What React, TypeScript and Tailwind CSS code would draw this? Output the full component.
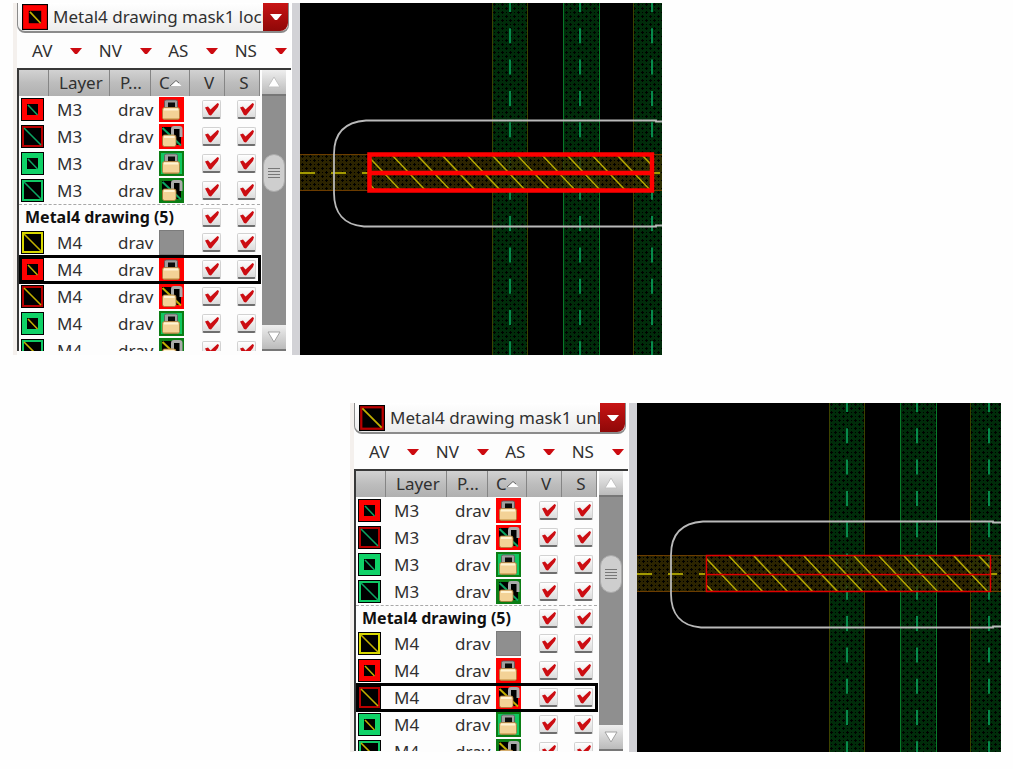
import React from "react";

type Tone = "redFill" | "redLine" | "greenFill" | "greenLine" | "yellowLine";
type Stroke = "green" | "yellow";

const toneColor: Record<Tone, string> = {
  redFill: "#ff0000",
  redLine: "#b80000",
  greenFill: "#0fd267",
  greenLine: "#0fc864",
  yellowLine: "#d8d800",
};

const strokeColor: Record<Stroke, string> = {
  green: "#0ca562",
  yellow: "#c2b000",
};

function Swatch({ tone, stroke, large }: { tone: Tone; stroke: Stroke; large?: boolean }) {
  const filled = tone === "redFill" || tone === "greenFill";
  return (
    <svg viewBox="0 0 23 23" className={large ? "block size-[26px] shrink-0" : "block size-[23px] shrink-0"} aria-hidden="true">
      <rect width="23" height="23" fill="#000" />
      <rect x="1" y="1" width="21" height="21" fill={toneColor[tone]} />
      {filled ? (
        <>
          <rect x="6" y="6" width="11" height="11" fill="#000" />
          <path d="M7 7L16.500 17" stroke={strokeColor[stroke]} strokeWidth="1.500" />
        </>
      ) : (
        <>
          <rect x="3" y="3" width="17" height="17" fill="#000" />
          <path d="M3 3L20 20" stroke={strokeColor[stroke]} strokeWidth="1.600" />
        </>
      )}
    </svg>
  );
}

type LockKind = "locked" | "unlocked" | "none";

function LockIcon({ kind, tone, stroke }: { kind: LockKind; tone: Tone; stroke: Stroke }) {
  if (kind === "none") {
    return (
      <svg viewBox="0 0 25 25" className="block size-[25px]" aria-hidden="true">
        <rect width="25" height="25" fill="#8f8f8f" />
        <rect x="0.5" y="0.5" width="24" height="24" fill="none" stroke="#7c7c7c" />
      </svg>
    );
  }
  const red = tone === "redFill" || tone === "redLine";
  const border = red ? "#ff0000" : "#0b7d14";
  return (
    <svg viewBox="0 0 25 25" className="block size-[25px]" aria-hidden="true">
      <rect width="25" height="25" fill={border} />
      {kind === "locked" ? (
        <>
          {!red && <rect x="2" y="2" width="21" height="21" fill="#10c860" />}
          <path d="M5.500 12V4.500Q5.500 3 7 3H17Q18.500 3 18.500 4.500V12Z" fill="#a0a0a0" stroke="#555" strokeWidth="0.800" />
          <rect x="9" y="5.500" width="7" height="5" fill="#0c0c0c" />
          <path d="M3.500 12.500Q3.500 10.500 5.500 10.500H18.500Q20.500 10.500 20.500 12.500V20.500Q20.500 22.500 18.500 22.500H5.500Q3.500 22.500 3.500 20.500Z" fill="#f3d296" stroke="#a87836" strokeWidth="0.800" />
          <path d="M5 12.500H19" stroke="#fff3d2" strokeWidth="2" />
          <path d="M5 21.500H19" stroke="#d8ac65" />
        </>
      ) : (
        <>
          <rect x="3" y="3" width="19" height="18" fill="#000" />
          <path d="M13.500 11V5Q13.500 3.500 15 3.500H20.500Q22 3.500 22 5V13" fill="none" stroke="#aaa" strokeWidth="3" />
          <path d="M3.500 4L22 21.500" stroke={strokeColor[stroke]} strokeWidth="2" />
          <path d="M3.500 13Q3.500 11 5.500 11H15Q17 11 17 13V20.500Q17 22.500 15 22.500H5.500Q3.500 22.500 3.500 20.500Z" fill="#f3d296" stroke="#a87836" strokeWidth="0.800" />
          <path d="M5 13H15.500" stroke="#fff3d2" strokeWidth="2" />
        </>
      )}
    </svg>
  );
}

function Check({ label }: { label: string }) {
  return (
    <label className="relative block size-[19px]">
      <input
        type="checkbox"
        defaultChecked
        aria-label={label}
        className="peer block size-[19px] appearance-none rounded-xs border border-[#d2d2d2] border-b-2 border-b-[#6e6e6e] bg-linear-to-b from-white to-[#dcdcdc]"
      />
      <svg viewBox="0 0 19 19" className="pointer-events-none absolute inset-0 hidden size-[19px] peer-checked:block" aria-hidden="true">
        <path d="M3 7.500L6 6.500L8.500 9.500L15.500 3L17 4L16 7L9 15.500L7 15Z" fill="#cc0d12" />
      </svg>
    </label>
  );
}

function Caret({ className }: { className: string }) {
  return (
    <svg viewBox="0 0 12 6" className={className} aria-hidden="true">
      <path d="M0 0H12L7 6H5Z" fill="currentColor" />
    </svg>
  );
}

type Row = { layer: string; tone: Tone; stroke: Stroke; lock: LockKind };

const m3Rows: Row[] = [
  { layer: "M3", tone: "redFill", stroke: "green", lock: "locked" },
  { layer: "M3", tone: "redLine", stroke: "green", lock: "unlocked" },
  { layer: "M3", tone: "greenFill", stroke: "green", lock: "locked" },
  { layer: "M3", tone: "greenLine", stroke: "green", lock: "unlocked" },
];

const m4Rows: Row[] = [
  { layer: "M4", tone: "yellowLine", stroke: "yellow", lock: "none" },
  { layer: "M4", tone: "redFill", stroke: "yellow", lock: "locked" },
  { layer: "M4", tone: "redLine", stroke: "yellow", lock: "unlocked" },
  { layer: "M4", tone: "greenFill", stroke: "yellow", lock: "locked" },
  { layer: "M4", tone: "greenLine", stroke: "yellow", lock: "unlocked" },
];

function LayerRow({ row, selected }: { row: Row; selected?: boolean }) {
  return (
    <tr
      aria-selected={selected}
      className={selected ? "h-[27px] outline-[3px] -outline-offset-2 outline-black" : "h-[27px]"}
    >
      <td className="p-0 pl-0.5"><Swatch tone={row.tone} stroke={row.stroke} /></td>
      <td className="p-0 pl-2">{row.layer}</td>
      <td className="p-0 pl-2 whitespace-nowrap">drav</td>
      <td className="p-0 pl-2"><LockIcon kind={row.lock} tone={row.tone} stroke={row.stroke} /></td>
      <td className="p-0 pl-3"><Check label={row.layer + " visible"} /></td>
      <td className="p-0 pl-3"><Check label={row.layer + " selectable"} /></td>
    </tr>
  );
}

function LayerTable({ selected }: { selected: number }) {
  const head = "border-r border-[#858585] p-0 font-normal";
  return (
    <table className="w-[241px] shrink-0 table-fixed border-separate border-spacing-0 self-start text-[17px] leading-5">
      <colgroup>
        <col className="w-[30px]" />
        <col className="w-[61px]" />
        <col className="w-[41px]" />
        <col className="w-[39px]" />
        <col className="w-[35px]" />
        <col className="w-[35px]" />
      </colgroup>
      <thead>
        <tr className="h-[26px] bg-linear-to-b from-[#d2d2d2] via-[#bdbdbd] to-[#b0b0b0]">
          <th className={head} aria-label="Swatch" />
          <th className={head + " pl-2.5 text-left"}>Layer</th>
          <th className={head + " pl-2.5 text-left"}>P...</th>
          <th className={head}>
            <span className="flex items-center pl-2">
              C
              <svg viewBox="0 0 12 8" className="h-2 w-3" aria-hidden="true">
                <path d="M0.500 7L6 1.500L11.500 7Z" fill="#fff" />
                <path d="M0 7L6 1.500L9 4" fill="none" stroke="#666" />
              </svg>
            </span>
          </th>
          <th className={head + " pl-1"}>V</th>
          <th className={head + " pl-1"}>S</th>
        </tr>
      </thead>
      <tbody>
        {m3Rows.map((row, i) => <LayerRow key={i} row={row} />)}
        <tr className="h-[25px] text-base font-bold text-[#101010]">
          <th scope="row" colSpan={4} className="border-t border-dashed border-[#a8a8a8] p-0 pl-1.5 text-left whitespace-nowrap">
            Metal4 drawing (5)
          </th>
          <td className="border-t border-dashed border-[#a8a8a8] p-0 pl-3"><Check label="Metal4 visible" /></td>
          <td className="border-t border-dashed border-[#a8a8a8] p-0 pl-3"><Check label="Metal4 selectable" /></td>
        </tr>
        {m4Rows.map((row, i) => <LayerRow key={i} row={row} selected={i === selected} />)}
      </tbody>
    </table>
  );
}

function ScrollBar() {
  const button =
    "flex h-[26px] items-center justify-center border-b-2 border-[#777] bg-linear-to-b from-[#eee] to-[#bbb]";
  return (
    <div className="ml-0.5 flex w-6 shrink-0 flex-col bg-[#8f8f8f]">
      <button type="button" aria-label="Scroll up" className={button}>
        <svg viewBox="0 0 16 12" className="h-3 w-4" aria-hidden="true">
          <path d="M8 1L14 11H2Z" fill="#fff" stroke="#c2c2c2" />
        </svg>
      </button>
      <div className="flex flex-1 flex-col pt-[58px]">
        <div className="mx-px flex h-[38px] flex-col items-center justify-center gap-0.5 rounded-full border border-[#aaa] bg-[#cecece]">
          <span className="h-px w-3 bg-[#777]" />
          <span className="h-px w-3 bg-[#777]" />
          <span className="h-px w-3 bg-[#777]" />
          <span className="h-px w-3 bg-[#777]" />
        </div>
      </div>
      <button type="button" aria-label="Scroll down" className={button}>
        <svg viewBox="0 0 16 12" className="h-3 w-4" aria-hidden="true">
          <path d="M8 11L14 1H2Z" fill="#fff" stroke="#a2a2a2" />
        </svg>
      </button>
    </div>
  );
}

function GreenTrack({ x, width, edge }: { x: number; width: number; edge: string }) {
  return (
    <g>
      <rect x={x} y="0" width={width} height="100%" fill="url(#green-weave)" />
      <rect x={x} y="0" width="1" height="100%" fill={edge} />
      <rect x={x + width - 1} y="0" width="1" height="100%" fill={edge} />
    </g>
  );
}

function LayoutCanvas({ top, bold }: { top: number; bold: boolean }) {
  const hatch = Array.from({ length: 13 }, (_, i) => 42 + i * 25);
  const clip = bold ? "hatch-bold" : "hatch-thin";
  return (
    <svg className="absolute inset-0 size-full" role="img" aria-label="Metal layout view">
      <defs>
        <pattern id="green-weave" width="8" height="8" patternUnits="userSpaceOnUse">
          <rect width="8" height="8" fill="#002c0a" />
          <path d="M2 0h1v1h1v1h-1v1h-1v-1h-1v-1h1ZM6 4h1v1h1v1h-1v1h-1v-1h-1v-1h1Z" fill="#000" />
          <path d="M6 1h1v1h-1ZM2 5h1v1h-1Z" fill="#000" />
        </pattern>
        <pattern id="olive-weave" width="8" height="8" patternUnits="userSpaceOnUse">
          <rect width="8" height="8" fill="#3a3000" fillOpacity="0.750" />
          <path d="M2 0h1v1h1v1h-1v1h-1v-1h-1v-1h1ZM6 4h1v1h1v1h-1v1h-1v-1h-1v-1h1Z" fill="#000" />
          <path d="M6 1h1v1h-1ZM2 5h1v1h-1Z" fill="#000" />
        </pattern>
        <clipPath id={clip}>
          <rect x="69" y="152" width="285" height="36" />
        </clipPath>
      </defs>
      <GreenTrack x={192} width={36} edge="#3c4200" />
      <GreenTrack x={263} width={37} edge="#08792a" />
      <GreenTrack x={333} width={40} edge="#3c4200" />
      <g stroke="#078a4c" strokeWidth="2" strokeDasharray="15 16.300">
        <path d="M210 -6V400M280 -6V400M352 -6V400" />
      </g>
      <g transform={`translate(0 ${top})`}>
        <rect x="0" y="151" width="100%" height="37" fill="url(#olive-weave)" />
        <rect x="0" y="151" width="100%" height="1" fill="#6b3c00" />
        <rect x="0" y="187" width="100%" height="1" fill="#6b3c00" />
        <path d="M0 170H68" stroke="#a39a00" strokeWidth="2" strokeDasharray="15 16" />
        <path d="M354 170H360" stroke="#a39a00" strokeWidth="2" />
        <g clipPath={`url(#${clip})`} stroke="#b5a800" strokeWidth="1.500">
          {hatch.map((x) => (
            <path key={x} d={`M${x} 152L${x + 34} 188`} />
          ))}
        </g>
        <path
          d="M364 118.500H356V117.500H66C44 119 34 131 34 151V190C34 210 44 222 64 223.500H356V222.500H364"
          fill="none"
          stroke="#b9b9b9"
          strokeWidth="1.800"
        />
        {bold ? (
          <path d="M69.500 151.500H352V187.500H69.500ZM69.500 170H352" fill="none" stroke="#ff0000" strokeWidth="4.500" />
        ) : (
          <path d="M69.500 151.500H353.500V187.500H69.500ZM69.500 170.500H353.500" fill="none" stroke="#e00000" strokeWidth="1.500" />
        )}
      </g>
    </svg>
  );
}

type PaletteProps = {
  name: string;
  current: string;
  tone: Tone;
  selected: number;
  lower?: boolean;
};

function PalettePanel({ name, current, tone, selected, lower }: PaletteProps) {
  return (
    <section className="flex bg-[#fdfdfd]">
      <div className="flex w-[278px] shrink-0 flex-col border-l-4 border-[#f4f0ed]">
        <div
          className={
            (lower ? "h-[31px]" : "h-[30px]") +
            " relative mr-0.5 flex items-center rounded-b-lg border-x border-b-2 border-[#8b8b8b] bg-linear-to-b from-white to-[#ececec] pl-1"
          }
        >
          <Swatch tone={tone} stroke="yellow" large />
          <label htmlFor={name} className="sr-only">Active layer</label>
          <select id={name} className="mr-6 h-full min-w-0 flex-1 appearance-none truncate bg-transparent pl-[5px] text-[17px] text-clip outline-none">
            <option>{current}</option>
          </select>
          <span className="pointer-events-none absolute inset-y-0 right-0 flex w-[25px] items-center justify-center rounded-br-lg bg-linear-to-b from-[#c81414] to-[#8f0808] text-white">
            <Caret className="h-1.5 w-3" />
          </span>
        </div>
        <div className="flex h-[35px] items-center justify-between pr-1 pl-[15px] text-[17px]">
          {["AV", "NV", "AS", "NS"].map((item) => (
            <button key={item} type="button" className="flex items-center gap-[18px]">
              {item}
              <Caret className="h-1.5 w-3 text-[#cc0a10]" />
            </button>
          ))}
        </div>
        <div className={(lower ? "h-[282px]" : "h-[283px]") + " flex overflow-hidden border-t-2 border-l-2 border-[#383838]"}>
          <LayerTable selected={selected} />
          <ScrollBar />
        </div>
        <div className={lower ? "h-px" : "h-1"} />
      </div>
      <div className="w-[9px] shrink-0 border-l border-white bg-[#d2d2d6]" />
      <div className="relative min-w-0 flex-1 overflow-hidden bg-black">
        <LayoutCanvas top={lower ? 1 : 0} bold={!lower} />
      </div>
    </section>
  );
}

export default function App() {
  return (
    <main className="flex min-h-screen flex-col gap-12 bg-[#fefefe] pt-[3px] font-['Noto_Sans','Open_Sans',sans-serif] text-[#303030]">
      <div className="mr-[351px] ml-[13px]">
        <PalettePanel name="layer-locked" current="Metal4 drawing mask1 locked" tone="redFill" selected={1} />
      </div>
      <div className="mr-3 ml-[350px]">
        <PalettePanel name="layer-unlocked" current="Metal4 drawing mask1 unlocked" tone="redLine" selected={2} lower />
      </div>
    </main>
  );
}
